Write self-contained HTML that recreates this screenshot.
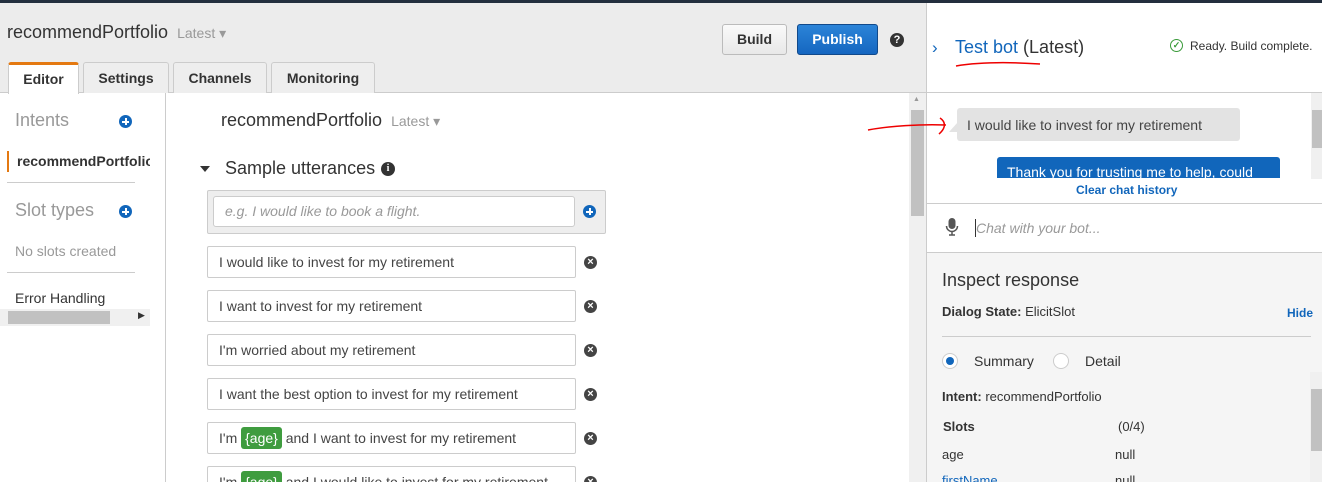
<!DOCTYPE html>
<html style="width:1322px;height:482px;overflow:hidden"><head><style>
*{box-sizing:border-box;margin:0;padding:0}
body{width:1322px;height:482px;overflow:hidden;position:relative;background:#fff;font-family:"Liberation Sans",Arial,sans-serif;color:#333}
.a{position:absolute;white-space:nowrap}
.plus{position:absolute;width:13px;height:13px;border-radius:50%;background:#1166bb}
.plus:before{content:"";position:absolute;left:3px;top:5.5px;width:7px;height:2px;background:#fff}
.plus:after{content:"";position:absolute;left:5.5px;top:3px;width:2px;height:7px;background:#fff}
.xc{position:absolute;width:13px;height:13px;border-radius:50%;background:#444;color:#fff;font-size:11px;line-height:13px;text-align:center;font-weight:bold}
.row{position:absolute;left:207px;width:369px;height:32px;border:1px solid #ccc;border-radius:2px;font-size:14px;line-height:30px;padding-left:11px;color:#444;background:#fff}
.tag{display:inline-block;background:#3f9c3f;color:#fff;border-radius:3px;padding:0 4px;line-height:22px}
.tab{position:absolute;top:62px;height:31px;border:1px solid #ccc;border-bottom:none;background:#eee;font-weight:bold;font-size:14px;text-align:center;line-height:30px;border-radius:3px 3px 0 0}
</style></head><body>
<div class="a" style="left:0;top:0;width:1322px;height:3px;background:#232f3e"></div>
<div class="a" style="left:0;top:3px;width:927px;height:90px;background:#ececec;border-bottom:1px solid #ccc"></div>
<div class="a" style="left:7px;top:22px;font-size:18px;color:#333">recommendPortfolio <span style="font-size:14px;color:#999;margin-left:4px">Latest ▾</span></div>
<div class="tab" style="left:8px;width:71px;background:#fff;border-top:3px solid #e47911;height:32px;line-height:28px">Editor</div>
<div class="tab" style="left:83px;width:86px">Settings</div>
<div class="tab" style="left:173px;width:94px">Channels</div>
<div class="tab" style="left:271px;width:104px">Monitoring</div>
<div class="a" style="left:722px;top:24px;width:65px;height:31px;border:1px solid #bbb;border-radius:3px;background:linear-gradient(#fafafa,#e8e8e8);font-weight:bold;font-size:14px;line-height:29px;text-align:center">Build</div>
<div class="a" style="left:797px;top:24px;width:81px;height:31px;border:1px solid #11498a;border-radius:3px;background:linear-gradient(#2b84d8,#1566c0);color:#fff;font-weight:bold;font-size:14px;line-height:29px;text-align:center">Publish</div>
<div class="a" style="left:890px;top:33px;width:14px;height:14px;border-radius:50%;background:#333;color:#fff;font-size:11px;font-weight:bold;line-height:14px;text-align:center">?</div>

<div class="a" style="left:165px;top:93px;width:1px;height:389px;background:#ccc"></div>
<div class="a" style="left:15px;top:110px;font-size:18px;color:#999">Intents</div>
<div class="plus" style="left:119px;top:115px"></div>
<div class="a" style="left:7px;top:151px;width:2px;height:21px;background:#e47911"></div>
<div class="a" style="left:17px;top:153px;font-size:14px;font-weight:bold;width:133px;overflow:hidden">recommendPortfolio</div>
<div class="a" style="left:7px;top:182px;width:128px;height:1px;background:#ccc"></div>
<div class="a" style="left:15px;top:200px;font-size:18px;color:#999">Slot types</div>
<div class="plus" style="left:119px;top:205px"></div>
<div class="a" style="left:15px;top:243px;font-size:14px;color:#999">No slots created</div>
<div class="a" style="left:7px;top:272px;width:128px;height:1px;background:#ccc"></div>
<div class="a" style="left:15px;top:290px;font-size:14px;color:#333">Error Handling</div>
<div class="a" style="left:0;top:309px;width:150px;height:17px;background:#f0f0f0"></div>
<div class="a" style="left:8px;top:311px;width:102px;height:13px;background:#c1c1c1"></div>
<div class="a" style="left:138px;top:310px;font-size:9px;color:#333">▶</div>

<div class="a" style="left:221px;top:110px;font-size:18px;color:#333">recommendPortfolio <span style="font-size:14px;color:#999;margin-left:4px">Latest ▾</span></div>
<svg class="a" style="left:200px;top:166px" width="10" height="6"><path d="M0 0h10L5 6z" fill="#333"/></svg>
<div class="a" style="left:225px;top:158px;font-size:18px;color:#333">Sample utterances</div>
<div class="a" style="left:381px;top:162px;width:14px;height:14px;border-radius:50%;background:#333;color:#fff;font-size:10px;font-weight:bold;line-height:14px;text-align:center;font-family:'Liberation Serif',serif">i</div>
<div class="a" style="left:207px;top:190px;width:399px;height:44px;background:#eee;border:1px solid #ccc;border-radius:2px"></div>
<div class="a" style="left:213px;top:196px;width:362px;height:31px;background:#fff;border:1px solid #ccc;border-radius:3px;font-size:14px;font-style:italic;color:#999;line-height:29px;padding-left:11px">e.g. I would like to book a flight.</div>
<div class="plus" style="left:583px;top:205px"></div>
<div class="row" style="top:246px">I would like to invest for my retirement</div>
<div class="row" style="top:290px">I want to invest for my retirement</div>
<div class="row" style="top:334px">I'm worried about my retirement</div>
<div class="row" style="top:378px">I want the best option to invest for my retirement</div>
<div class="row" style="top:422px">I'm <span class="tag">{age}</span> and I want to invest for my retirement</div>
<div class="row" style="top:466px">I'm <span class="tag">{age}</span> and I would like to invest for my retirement</div>
<div class="xc" style="left:584px;top:256px">×</div>
<div class="xc" style="left:584px;top:300px">×</div>
<div class="xc" style="left:584px;top:344px">×</div>
<div class="xc" style="left:584px;top:388px">×</div>
<div class="xc" style="left:584px;top:432px">×</div>
<div class="xc" style="left:584px;top:476px">×</div>
<div class="a" style="left:909px;top:93px;width:17px;height:389px;background:#f0f0f0"></div>
<div class="a" style="left:911px;top:110px;width:13px;height:106px;background:#c1c1c1"></div>
<div class="a" style="left:913px;top:96px;font-size:7px;color:#999">▲</div>

<div class="a" style="left:926px;top:3px;width:1px;height:479px;background:#ccc"></div>
<div class="a" style="left:927px;top:92px;width:395px;height:1px;background:#ccc"></div>
<div class="a" style="left:932px;top:38px;font-size:17px;color:#1166bb">›</div>
<div class="a" style="left:955px;top:37px;font-size:18px;color:#1166bb">Test bot <span style="color:#333">(Latest)</span></div>
<div class="a" style="left:1170px;top:39px;width:13px;height:13px;border:1.5px solid #3a9a3a;border-radius:50%;color:#3a9a3a;font-size:9px;line-height:10px;text-align:center;font-weight:bold">✓</div>
<div class="a" style="left:1190px;top:39px;font-size:12px;color:#333">Ready. Build complete.</div>
<svg class="a" style="left:949px;top:116px" width="9" height="16"><path d="M9 6L0 16h9z" fill="#e3e3e3"/></svg>
<div class="a" style="left:957px;top:108px;width:283px;height:33px;background:#e3e3e3;border-radius:3px;font-size:14px;color:#444;line-height:34px;padding-left:10px">I would like to invest for my retirement</div>
<div class="a" style="left:997px;top:157px;width:283px;height:21px;background:#1166bb;border-radius:3px 3px 0 0;font-size:14px;color:#fff;line-height:30px;padding-left:10px;overflow:hidden">Thank you for trusting me to help, could</div>
<div class="a" style="left:1076px;top:183px;font-size:12px;font-weight:bold;color:#1166bb">Clear chat history</div>
<div class="a" style="left:1311px;top:93px;width:11px;height:86px;background:#f0f0f0"></div>
<div class="a" style="left:1312px;top:110px;width:10px;height:38px;background:#c1c1c1"></div>
<div class="a" style="left:927px;top:203px;width:395px;height:1px;background:#ccc"></div>
<svg class="a" style="left:945px;top:217px" width="14" height="20" viewBox="0 0 14 20"><rect x="3.5" y="1" width="7" height="11" rx="3.5" fill="#555"/><path d="M1.5 9a5.5 5.5 0 0 0 11 0M7 14.5v3M4 18h6" stroke="#555" stroke-width="1.5" fill="none"/></svg>
<div class="a" style="left:975px;top:219px;width:1px;height:18px;background:#333"></div>
<div class="a" style="left:976px;top:220px;font-size:14px;font-style:italic;color:#999">Chat with your bot...</div>
<div class="a" style="left:927px;top:252px;width:395px;height:230px;background:#f5f5f5;border-top:1px solid #ccc"></div>
<div class="a" style="left:942px;top:270px;font-size:18px;color:#333">Inspect response</div>
<div class="a" style="left:942px;top:304px;font-size:13px;color:#333"><b>Dialog State:</b> ElicitSlot</div>
<div class="a" style="left:1287px;top:306px;font-size:12px;font-weight:bold;color:#1166bb">Hide</div>
<div class="a" style="left:942px;top:336px;width:369px;height:1px;background:#ccc"></div>
<div class="a" style="left:942px;top:353px;width:16px;height:16px;border-radius:50%;border:1px solid #ccc;background:#fff"><div style="margin:3px;width:8px;height:8px;border-radius:50%;background:#1166bb"></div></div>
<div class="a" style="left:974px;top:353px;font-size:14px;color:#333">Summary</div>
<div class="a" style="left:1053px;top:353px;width:16px;height:16px;border-radius:50%;border:1px solid #ccc;background:#fff"></div>
<div class="a" style="left:1085px;top:353px;font-size:14px;color:#333">Detail</div>
<div class="a" style="left:942px;top:389px;font-size:13px;color:#333"><b>Intent:</b> recommendPortfolio</div>
<div class="a" style="left:943px;top:419px;font-size:13px;font-weight:bold;color:#333">Slots</div>
<div class="a" style="left:1118px;top:419px;font-size:13px;color:#333">(0/4)</div>
<div class="a" style="left:942px;top:447px;font-size:13px;color:#333">age</div>
<div class="a" style="left:1115px;top:447px;font-size:13px;color:#333">null</div>
<div class="a" style="left:942px;top:473px;font-size:13px;color:#1166bb">firstName</div>
<div class="a" style="left:1115px;top:473px;font-size:13px;color:#333">null</div>
<div class="a" style="left:1310px;top:372px;width:12px;height:110px;background:#f0f0f0"></div>
<div class="a" style="left:1311px;top:389px;width:11px;height:62px;background:#c1c1c1"></div>

<svg class="a" style="left:0;top:0" width="1322" height="482"><path d="M956 66C980 62 1010 62 1040 64" stroke="#e00" stroke-width="1.5" fill="none"/><path d="M868 130C890 126 920 124 946 125M940 118c6 4 6 10 -1 16" stroke="#e00" stroke-width="1.5" fill="none"/></svg>
</body></html>
